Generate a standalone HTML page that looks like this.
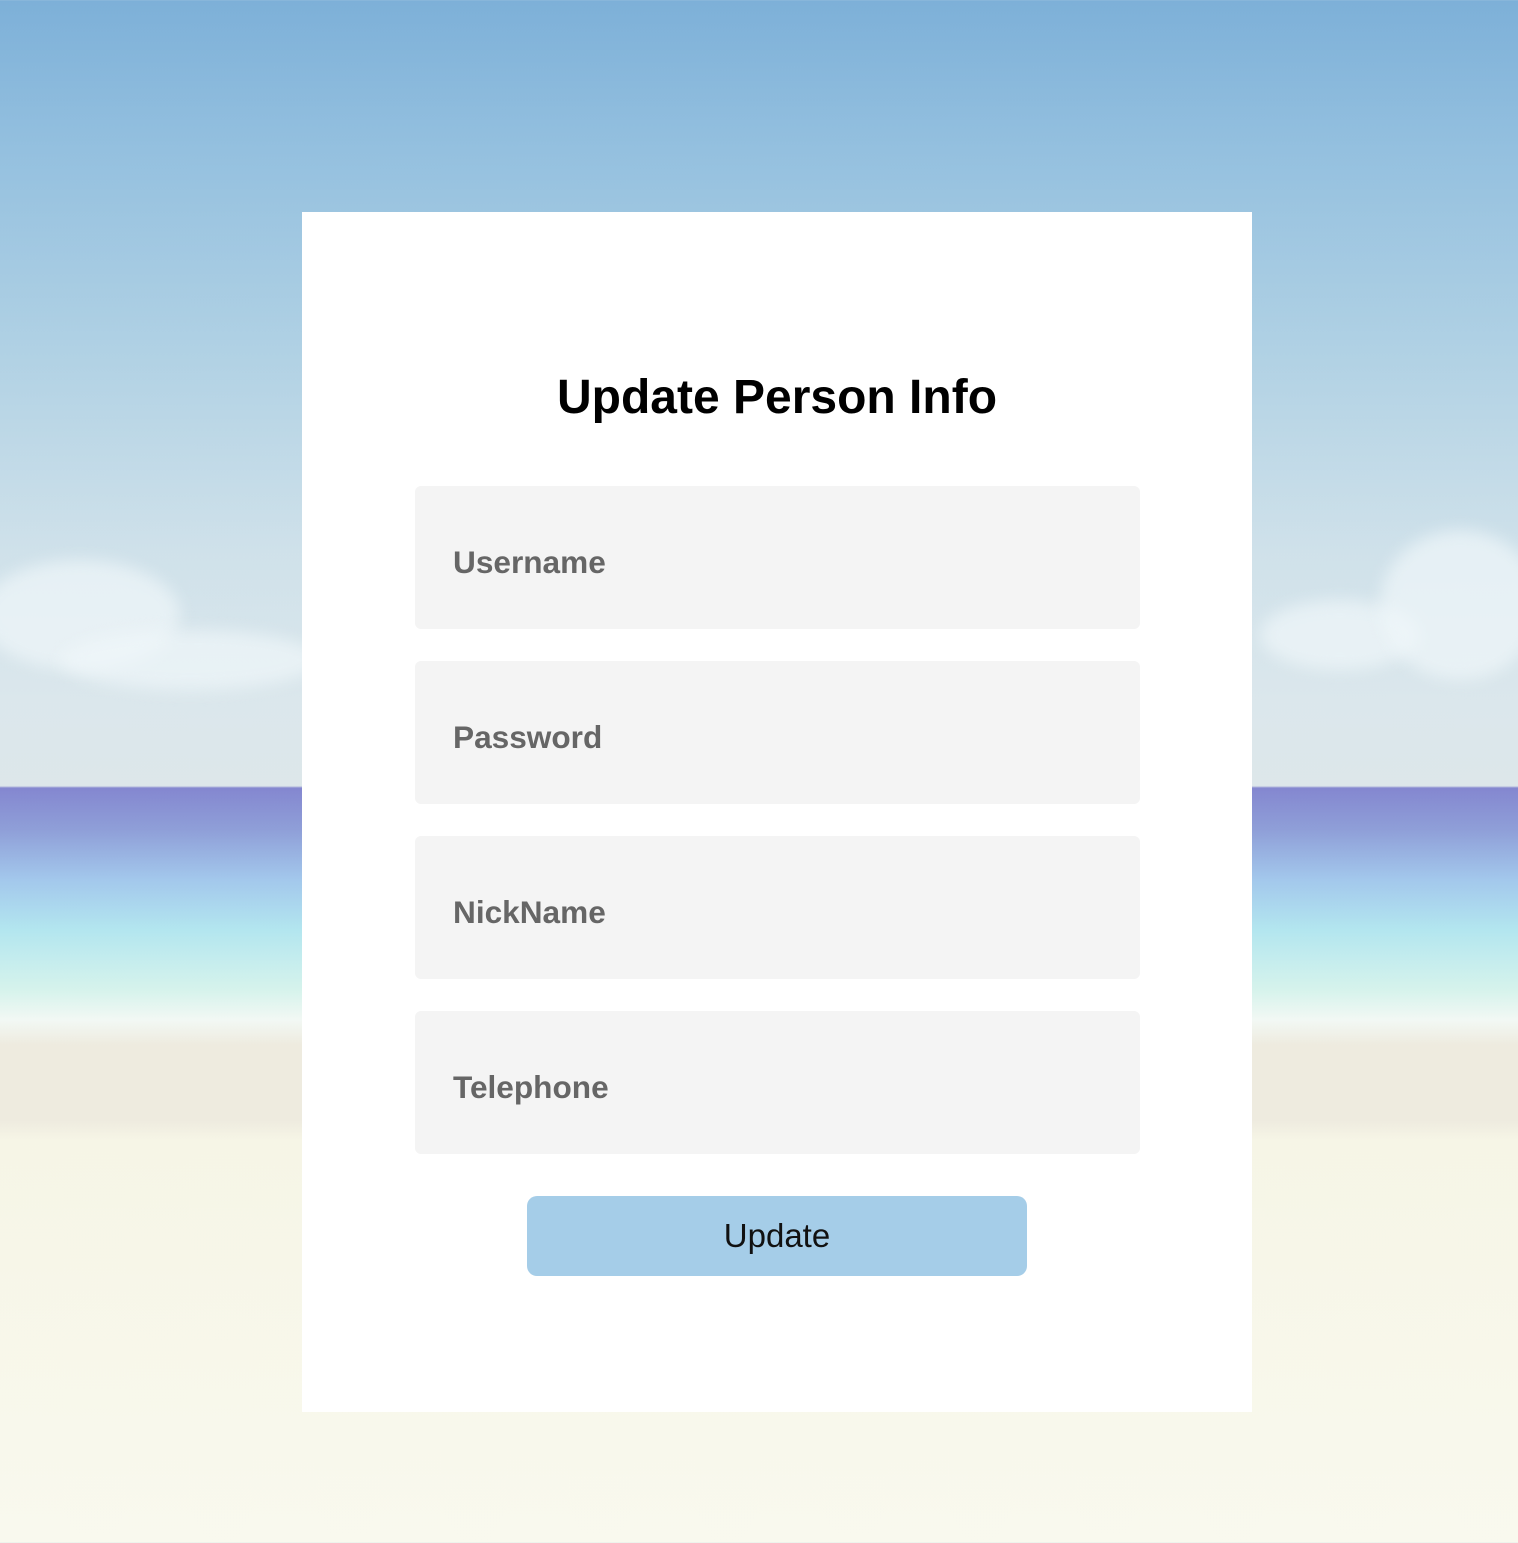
<!DOCTYPE html>
<html><head><meta charset="utf-8"><style>
html,body{margin:0;padding:0;}
body{width:1518px;height:1543px;position:relative;overflow:hidden;font-family:"Liberation Sans",Arial,sans-serif;
background:linear-gradient(to bottom,#7db0d8 0px,#94c0df 150px,#b0d1e4 350px,#cfe1ea 550px,#dbe7ec 700px,#dde7ea 786px,#8487d0 788px,#8f9fd8 830px,#a3c8ec 880px,#b3e6ef 930px,#d6f3ec 990px,#f2f8f4 1020px,#eeebdf 1045px,#eeebdf 1120px,#f6f5e6 1140px,#f9f9ee 1543px);}
.cloud{position:absolute;border-radius:50%;background:rgba(240,246,250,.7);filter:blur(8px);}
.card{position:absolute;left:302px;top:212px;width:950px;height:1200px;background:#fff;}
h1{position:absolute;left:0;width:100%;margin:0;text-align:center;font-size:48px;font-weight:bold;color:#000;line-height:56px;}
.f{position:absolute;left:415px;width:725px;height:143px;background:#f4f4f4;border-radius:6px;}
.f span{position:absolute;left:38px;top:59px;font-size:31.6px;font-weight:bold;color:#666;line-height:34px;}
.btn{position:absolute;left:527px;top:1196px;width:500px;height:80px;background:#a5cde8;border-radius:10px;text-align:center;line-height:80px;font-size:33px;color:#111;}
</style></head><body>
<div class="cloud" style="left:-20px;top:560px;width:200px;height:110px"></div>
<div class="cloud" style="left:60px;top:630px;width:260px;height:60px"></div>
<div class="cloud" style="left:1260px;top:600px;width:160px;height:70px"></div>
<div class="cloud" style="left:1380px;top:530px;width:160px;height:150px"></div>
<div class="card">
<h1 style="top:158px">Update Person Info</h1>
</div>
<div class="f" style="top:486px"><span>Username</span></div>
<div class="f" style="top:661px"><span>Password</span></div>
<div class="f" style="top:836px"><span>NickName</span></div>
<div class="f" style="top:1011px"><span>Telephone</span></div>
<div class="btn">Update</div>
</body></html>
